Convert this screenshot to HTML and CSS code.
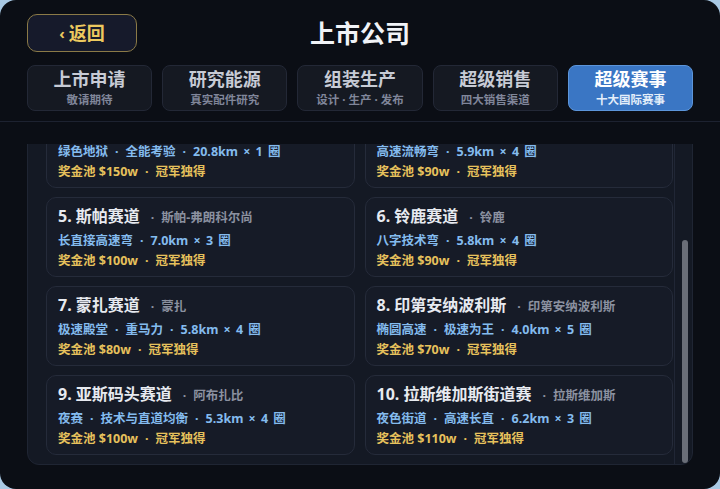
FILE: index.html
```html
<!DOCTYPE html>
<html lang="zh-CN">
<head>
    <meta charset="UTF-8">
    <meta name="viewport" content="width=device-width, initial-scale=1.0">
    <title>上市公司 - 超级赛事</title>
    <link rel="stylesheet" href="styles.css">
</head>
<body>
    <div class="app">
        <div class="header">
            <div class="top-row">
                <button class="back-btn"><span class="chev">‹</span>返回</button>
                <h1>上市公司</h1>
            </div>
            <div class="tabs">
                <div class="tab">
                    <div class="tab-title">上市申请</div>
                    <div class="tab-sub">敬请期待</div>
                </div>
                <div class="tab">
                    <div class="tab-title">研究能源</div>
                    <div class="tab-sub">真实配件研究</div>
                </div>
                <div class="tab">
                    <div class="tab-title">组装生产</div>
                    <div class="tab-sub">设计 · 生产 · 发布</div>
                </div>
                <div class="tab">
                    <div class="tab-title">超级销售</div>
                    <div class="tab-sub">四大销售渠道</div>
                </div>
                <div class="tab active">
                    <div class="tab-title">超级赛事</div>
                    <div class="tab-sub">十大国际赛事</div>
                </div>
            </div>
        </div>

        <div class="content">
            <div class="viewport">
                <div class="panel">
                    <div class="race-grid">
                        <div class="race">
                            <div class="race-title">3. 纽博格林北环<span class="loc"><span class="sep">·</span>纽博格林</span></div>
                            <div class="race-info">绿色地狱<span class="sep">·</span>全能考验<span class="sep">·</span>20.8km × 1 圈</div>
                            <div class="race-prize">奖金池 $150w<span class="sep">·</span>冠军独得</div>
                        </div>
                        <div class="race">
                            <div class="race-title">4. 银石赛道<span class="loc"><span class="sep">·</span>银石</span></div>
                            <div class="race-info">高速流畅弯<span class="sep">·</span>5.9km × 4 圈</div>
                            <div class="race-prize">奖金池 $90w<span class="sep">·</span>冠军独得</div>
                        </div>
                        <div class="race">
                            <div class="race-title">5. 斯帕赛道<span class="loc"><span class="sep">·</span>斯帕-弗朗科尔尚</span></div>
                            <div class="race-info">长直接高速弯<span class="sep">·</span>7.0km × 3 圈</div>
                            <div class="race-prize">奖金池 $100w<span class="sep">·</span>冠军独得</div>
                        </div>
                        <div class="race">
                            <div class="race-title">6. 铃鹿赛道<span class="loc"><span class="sep">·</span>铃鹿</span></div>
                            <div class="race-info">八字技术弯<span class="sep">·</span>5.8km × 4 圈</div>
                            <div class="race-prize">奖金池 $90w<span class="sep">·</span>冠军独得</div>
                        </div>
                        <div class="race">
                            <div class="race-title">7. 蒙扎赛道<span class="loc"><span class="sep">·</span>蒙扎</span></div>
                            <div class="race-info">极速殿堂<span class="sep">·</span>重马力<span class="sep">·</span>5.8km × 4 圈</div>
                            <div class="race-prize">奖金池 $80w<span class="sep">·</span>冠军独得</div>
                        </div>
                        <div class="race">
                            <div class="race-title">8. 印第安纳波利斯<span class="loc"><span class="sep">·</span>印第安纳波利斯</span></div>
                            <div class="race-info">椭圆高速<span class="sep">·</span>极速为王<span class="sep">·</span>4.0km × 5 圈</div>
                            <div class="race-prize">奖金池 $70w<span class="sep">·</span>冠军独得</div>
                        </div>
                        <div class="race">
                            <div class="race-title">9. 亚斯码头赛道<span class="loc"><span class="sep">·</span>阿布扎比</span></div>
                            <div class="race-info">夜赛<span class="sep">·</span>技术与直道均衡<span class="sep">·</span>5.3km × 4 圈</div>
                            <div class="race-prize">奖金池 $100w<span class="sep">·</span>冠军独得</div>
                        </div>
                        <div class="race">
                            <div class="race-title">10. 拉斯维加斯街道赛<span class="loc"><span class="sep">·</span>拉斯维加斯</span></div>
                            <div class="race-info">夜色街道<span class="sep">·</span>高速长直<span class="sep">·</span>6.2km × 3 圈</div>
                            <div class="race-prize">奖金池 $110w<span class="sep">·</span>冠军独得</div>
                        </div>
                    </div>
                    <div class="track">
                        <div class="thumb"></div>
                    </div>
                </div>
            </div>
        </div>
    </div>
</body>
</html>
```

FILE: styles.css
```css
* {
    box-sizing: border-box;
}
body {
    margin: 0;
    background: #a9c9e4;
    font-family: "Noto Sans", "Noto Sans CJK SC", sans-serif;
}
.app {
    width: 720px;
    height: 489px;
    background: #0b0e15;
    border-radius: 16px;
    overflow: hidden;
    display: flex;
    flex-direction: column;
}
.header {
    padding: 14px 27px 10px;
    border-bottom: 1px solid #1d2230;
}
.top-row {
    position: relative;
    height: 38px;
    display: flex;
    align-items: center;
    justify-content: center;
}
.back-btn {
    position: absolute;
    left: 0;
    top: 0;
    width: 110px;
    height: 38px;
    background: #161a2b;
    border: 1.5px solid #8b7a47;
    border-radius: 10px;
    color: #ecc95f;
    font-family: inherit;
    font-size: 18px;
    font-weight: bold;
    display: flex;
    align-items: center;
    justify-content: center;
    padding: 0 0 2px;
}
.chev {
    font-size: 15px;
    margin-right: 4px;
    padding-top: 2px;
}
h1 {
    margin: 0;
    color: #f1f3f7;
    font-size: 25px;
    font-weight: bold;
    line-height: 38px;
}
.tabs {
    display: grid;
    grid-template-columns: repeat(5, 1fr);
    gap: 10px;
    margin-top: 13px;
}
.tab {
    height: 46px;
    background: #151922;
    border: 1px solid #232836;
    border-radius: 8px;
    display: flex;
    flex-direction: column;
    align-items: center;
    justify-content: center;
    padding-bottom: 1px;
}
.tab-title {
    color: #c7cbd5;
    font-size: 18px;
    font-weight: bold;
    line-height: 21px;
}
.tab-sub {
    color: #80869a;
    font-size: 11.5px;
    font-weight: bold;
    line-height: 15px;
    margin-top: 2px;
}
.tab.active {
    background: #3a76c4;
    border-color: #5c95da;
}
.tab.active .tab-title {
    color: #ffffff;
}
.tab.active .tab-sub {
    color: #e4eefa;
}
.content {
    flex: 1;
    padding: 22px 27px 0;
    min-height: 0;
}
.viewport {
    height: 100%;
    overflow: hidden;
}
.panel {
    margin-top: -46px;
    background: #141924;
    border: 1px solid #1f2533;
    border-radius: 12px;
    display: flex;
}
.race-grid {
    flex: 1;
    display: grid;
    grid-template-columns: 1fr 1fr;
    gap: 9px 10px;
    padding: 9px 0 9px 18px;
}
.race {
    height: 80px;
    background: #161b27;
    border: 1px solid #252b3a;
    border-radius: 10px;
    padding: 7px 11px 0;
}
.race-title {
    color: #e7eaf0;
    font-size: 16px;
    font-weight: bold;
    line-height: 22px;
    white-space: nowrap;
}
.loc {
    color: #8b91a0;
    font-size: 12.5px;
    margin-left: 4px;
}
.sep {
    display: inline-block;
    margin: 0 7px;
}
.race-info {
    color: #84bbee;
    font-size: 12.5px;
    font-weight: bold;
    line-height: 20px;
    margin-top: 2px;
    white-space: nowrap;
    word-spacing: 2px;
}
.race-prize {
    color: #e6c15c;
    font-size: 12.5px;
    font-weight: bold;
    line-height: 20px;
    white-space: nowrap;
}
.track {
    width: 18px;
    margin-left: 1px;
    border-left: 1px solid #202635;
    display: flex;
    flex-direction: column;
    justify-content: flex-end;
    align-items: center;
    padding: 0 0 1px 2px;
}
.thumb {
    width: 6px;
    height: 223px;
    background: #6a6e78;
    border-radius: 3px;
}
```
